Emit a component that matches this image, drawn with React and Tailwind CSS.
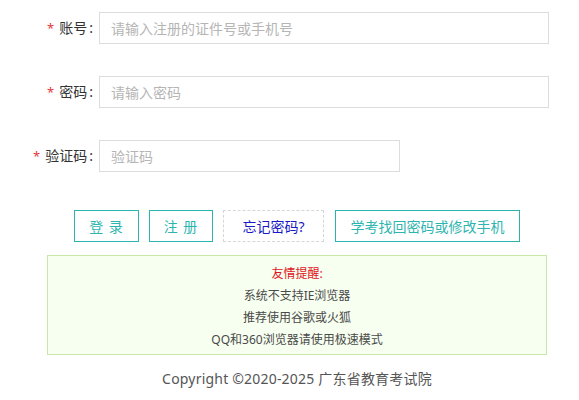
export default function App() {
  const fields = [
    { label: "账号", placeholder: "请输入注册的证件号或手机号", w: "w-[450px]" },
    { label: "密码", placeholder: "请输入密码", w: "w-[450px]", type: "password" },
    { label: "验证码", placeholder: "验证码", w: "w-[301px]" },
  ];

  return (
    <div
      className="w-[579px] h-[400px] bg-white text-[#333] overflow-hidden"
      style={{ fontFamily: '"Noto Sans", "Noto Sans CJK SC", sans-serif' }}
    >
      <div className="ml-[47px] w-[500px] pt-[12px]">
        {/* login form rows */}
        <div className="flex flex-col gap-[32px]">
          {fields.map((f) => (
            <div key={f.label} className="flex items-center">
              <label className="w-[52px] shrink-0 pr-[6px] flex justify-end items-center text-[14px] leading-[20px] whitespace-nowrap">
                <span className="text-[#e4393c] mr-[5px] text-[13px]">*</span>
                <span>{f.label}</span>
                <span className="ml-[2px]">:</span>
              </label>
              <input
                type={f.type || "text"}
                placeholder={f.placeholder}
                className={`${f.w} h-[32px] shrink-0 border border-[#dcdcdc] px-[11px] text-[14px] outline-none placeholder:text-[#b5b5b5] bg-white`}
              />
            </div>
          ))}
        </div>

        {/* action buttons */}
        <div className="mt-[38px] flex justify-center gap-[10px] text-[14px]">
          <button className="w-[65px] h-[32px] border border-[#2bb3ae] text-[#2fb5b0] tracking-[1px]">
            登 录
          </button>
          <button className="w-[64px] h-[32px] border border-[#2bb3ae] text-[#2fb5b0] tracking-[1px]">
            注 册
          </button>
          <button className="w-[101px] h-[32px] border border-dashed border-[#d6d6d6] text-[#1a1ac4]">
            忘记密码?
          </button>
          <button className="ml-[1px] w-[185px] h-[32px] border border-[#2bb3ae] text-[#2fb5b0]">
            学考找回密码或修改手机
          </button>
        </div>

        {/* notice box */}
        <div className="mt-[13px] border border-[#c8e8a8] bg-[#f7fff0] pt-[7px] pb-[3px] text-center text-[12px] leading-[22px] text-[#4a4a4a]">
          <div className="text-[#e0141e]">友情提醒:</div>
          <div>系统不支持IE浏览器</div>
          <div>推荐使用谷歌或火狐</div>
          <div>QQ和360浏览器请使用极速模式</div>
        </div>

        <div className="mt-[14px] text-center text-[14px] leading-[20px] text-[#555] tracking-[0.2px]">
          Copyright ©2020-2025 广东省教育考试院
        </div>
      </div>
    </div>
  );
}
